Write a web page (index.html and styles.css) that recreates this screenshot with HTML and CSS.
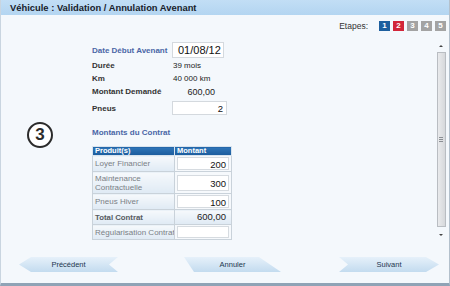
FILE: index.html
```html
<!DOCTYPE html>
<html lang="fr">
<head>
    <meta charset="UTF-8">
    <title>Véhicule : Validation / Annulation Avenant</title>
    <link rel="stylesheet" href="styles.css">
</head>
<body>

    <div class="window">
        <div class="titlebar">Véhicule : Validation / Annulation Avenant</div>

        <div class="steps">
            <span class="steps-label">Etapes:</span>
            <span class="step step-done">1</span>
            <span class="step step-current">2</span>
            <span class="step">3</span>
            <span class="step">4</span>
            <span class="step">5</span>
        </div>

        <div class="content">
            <div class="marker">3</div>

            <div class="form">
                <div class="row row-date">
                    <span class="label label-blue">Date Début Avenant</span>
                    <span class="field field-date">01/08/12</span>
                </div>
                <div class="row">
                    <span class="label">Durée</span>
                    <span class="value">39 mois</span>
                </div>
                <div class="row">
                    <span class="label">Km</span>
                    <span class="value">40 000 km</span>
                </div>
                <div class="row">
                    <span class="label">Montant Demandé</span>
                    <span class="value value-amount">600,00</span>
                </div>
                <div class="row row-pneus">
                    <span class="label">Pneus</span>
                    <span class="field field-pneus">2</span>
                </div>

                <div class="section-title">Montants du Contrat</div>

                <table class="contract">
                    <tr class="head">
                        <th>Produit(s)</th>
                        <th>Montant</th>
                    </tr>
                    <tr class="r16">
                        <td class="name">Loyer Financier</td>
                        <td class="amount"><span class="box">200</span></td>
                    </tr>
                    <tr class="r22">
                        <td class="name wrap">Maintenance Contractuelle</td>
                        <td class="amount"><span class="box">300</span></td>
                    </tr>
                    <tr class="r16">
                        <td class="name">Pneus Hiver</td>
                        <td class="amount"><span class="box">100</span></td>
                    </tr>
                    <tr class="r15 total">
                        <td class="name">Total Contrat</td>
                        <td class="amount total-amount">600,00</td>
                    </tr>
                    <tr class="r15">
                        <td class="name">Régularisation Contrat</td>
                        <td class="amount"><span class="box"></span></td>
                    </tr>
                </table>
            </div>

            <div class="scrollbar">
                <div class="arrow arrow-up"></div>
                <div class="track"><div class="grip"></div></div>
                <div class="arrow arrow-down"></div>
            </div>
        </div>

        <div class="nav">
            <div class="btn btn-prev">Précédent</div>
            <div class="btn btn-cancel">Annuler</div>
            <div class="btn btn-next">Suivant</div>
        </div>
    </div>

</body>
</html>
```

FILE: styles.css
```css
/* Base */
body {
    margin: 0;
    font-family: 'Liberation Sans', Arial, sans-serif;
    background-color: #ffffff;
}
.window {
    position: relative;
    width: 448px;
    height: 283px;
    background-color: #f4f8fc;
    border-left: 1px solid #c9d5e0;
    border-right: 1px solid #b3c0cc;
    border-bottom: 3px solid #8fa3b6;
    display: flex;
    flex-direction: column;
}
.titlebar {
    height: 15px;
    line-height: 15px;
    padding-left: 9px;
    background: linear-gradient(#c2def5, #b3d5f1);
    font-size: 9.4px;
    font-weight: bold;
    color: #17212b;
}

/* Steps */
.steps {
    height: 25px;
    display: flex;
    justify-content: flex-end;
    align-items: flex-start;
    padding: 6px 3px 0 0;
    box-sizing: border-box;
}
.steps-label {
    font-size: 8.5px;
    color: #333;
    line-height: 10px;
    margin-right: 8px;
}
.step {
    width: 11px;
    height: 10px;
    line-height: 10px;
    margin-left: 3px;
    text-align: center;
    font-size: 8px;
    font-weight: bold;
    color: #ffffff;
    background-color: #a3a3a3;
}
.step-done {
    background-color: #1d5f9e;
}
.step-current {
    background-color: #d22539;
}

/* Content */
.content {
    position: relative;
    height: 208px;
    display: flex;
}
.marker {
    position: absolute;
    left: 26px;
    top: 82px;
    width: 22px;
    height: 22px;
    border: 2px solid #2b2b2b;
    border-radius: 50%;
    text-align: center;
    line-height: 22px;
    font-size: 17px;
    font-weight: bold;
    color: #2b2b2b;
    background-color: #ffffff;
}
.form {
    flex: 1;
    padding: 2px 0 0 91px;
}
.row {
    display: flex;
    align-items: center;
    height: 13px;
}
.row-date {
    height: 16px;
    margin-bottom: 1px;
}
.row-pneus {
    height: 14px;
    margin-top: 3px;
}
.label {
    width: 80px;
    font-size: 8px;
    font-weight: bold;
    color: #333;
}
.label-blue {
    color: #4a66a6;
}
.value {
    font-size: 8px;
    color: #222;
    padding-left: 1px;
}
.value-amount {
    width: 42px;
    text-align: right;
    font-size: 9px;
}
.field {
    height: 14px;
    line-height: 14px;
    background-color: #ffffff;
    border: 1px solid #d4d9de;
    box-sizing: border-box;
    color: #111;
}
.field-date {
    width: 52px;
    padding-left: 5px;
    font-size: 11px;
    height: 16px;
    line-height: 15px;
}
.field-pneus {
    width: 55px;
    text-align: right;
    padding-right: 3px;
    font-size: 9.5px;
}
.section-title {
    margin-top: 12px;
    height: 12px;
    line-height: 12px;
    font-size: 8px;
    font-weight: bold;
    color: #4a66a6;
}

/* Contract table */
.contract {
    margin-top: 7px;
    border-collapse: collapse;
    width: 140px;
    table-layout: fixed;
}
.contract tr {
    height: 15px;
}
.contract .head {
    height: 9px;
}
.contract .r16 { height: 16px; }
.contract .r22 { height: 22px; }
.contract th {
    padding: 0 2px;
    font-size: 7.5px;
    line-height: 8px;
    text-align: left;
    color: #ffffff;
    background: linear-gradient(#2f75b8, #1c5c9c);
    border: 1px solid #d9e4ee;
}
.contract th:first-child {
    width: 77px;
}
.contract td {
    padding: 0;
    border: 1px solid #c9d2da;
}
.contract .name {
    padding-left: 2px;
    font-size: 8px;
    line-height: 9px;
    color: #7a7f86;
    white-space: nowrap;
    overflow: hidden;
    background: linear-gradient(#f6f9fc, #dfeaf4);
}
.contract .wrap {
    white-space: normal;
}
.contract .total .name {
    font-weight: bold;
    color: #555a60;
    font-size: 7.8px;
}
.contract .amount {
    padding: 1px 2px;
    text-align: right;
    background-color: #f6f9fc;
}
.box {
    display: block;
    height: 12px;
    line-height: 12px;
    padding-right: 2px;
    background-color: #ffffff;
    border: 1px solid #d6dbe0;
    box-sizing: border-box;
    font-size: 9.5px;
    color: #111;
}
.r16 .box {
    height: 13px;
    line-height: 13px;
}
.r22 .box {
    height: 16px;
    line-height: 16px;
}
.contract .total-amount {
    padding-right: 5px;
    font-size: 9.5px;
    line-height: 10px;
    color: #222;
    background: linear-gradient(#f6f9fc, #dfeaf4);
}

/* Scrollbar */
.scrollbar {
    width: 10px;
    margin: 2px 3px 0 0;
    display: flex;
    flex-direction: column;
    align-items: center;
}
.arrow {
    width: 10px;
    height: 9px;
    position: relative;
}
.arrow::after {
    content: '';
    position: absolute;
    left: 3px;
    border-left: 2px solid transparent;
    border-right: 2px solid transparent;
}
.arrow-up::after {
    top: 3px;
    border-bottom: 2px solid #444;
}
.arrow-down {
    margin-top: 3px;
}
.arrow-down::after {
    top: 4px;
    border-top: 2px solid #444;
}
.track {
    width: 9px;
    height: 175px;
    margin-top: 1px;
    border: 1px solid #b9bdc2;
    box-sizing: border-box;
    background: linear-gradient(90deg, #e9eaec, #d6d8db);
    display: flex;
    align-items: center;
    justify-content: center;
}
.grip {
    width: 4px;
    height: 5px;
    background: repeating-linear-gradient(#8a8e93 0 1px, transparent 1px 2px);
}

/* Navigation */
.nav {
    flex: 1;
    display: flex;
    align-items: flex-start;
    padding: 9px 0 0 18px;
}
.btn {
    height: 15px;
    line-height: 15px;
    text-align: center;
    font-size: 7.5px;
    color: #1d3650;
    background: linear-gradient(#e6f1fa, #c3dbef);
}
.btn-prev {
    width: 99px;
    clip-path: polygon(0 50%, 12px 0, 100% 0, calc(100% - 9px) 50%, 100% 100%, 12px 100%);
}
.btn-cancel {
    width: 97px;
    margin-left: 66px;
    clip-path: polygon(0 0, calc(100% - 22px) 0, 100% 100%, 10px 100%);
}
.btn-next {
    width: 100px;
    margin-left: 58px;
    clip-path: polygon(0 0, calc(100% - 13px) 0, 100% 50%, calc(100% - 13px) 100%, 0 100%, 9px 50%);
}
```
